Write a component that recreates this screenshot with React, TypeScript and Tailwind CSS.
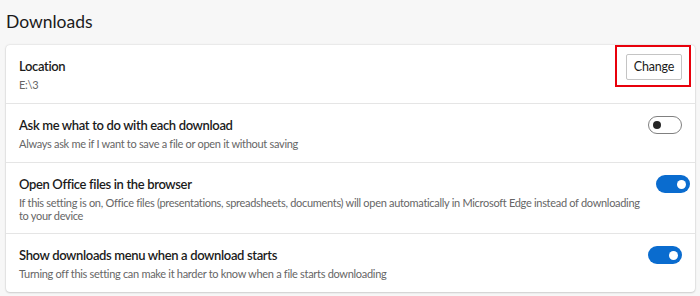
import React from 'react';

const font = { fontFamily: 'Lato, "Noto Sans", Arial, sans-serif' };

const titleCls = 'text-[13px] font-semibold leading-[20px] tracking-[-0.35px] text-[#1b1b1b]';
const descCls = 'text-[11px] tracking-[-0.3px] text-[#666666]';

function Toggle({ on }: { on: boolean }) {
  if (on) {
    return (
      <div className="flex h-[18px] w-[34px] shrink-0 items-center justify-end rounded-full bg-[#0a6ccf] pr-[4px]">
        <div className="h-[9px] w-[9px] rounded-full bg-white" />
      </div>
    );
  }
  return (
    <div className="flex h-[18px] w-[34px] shrink-0 items-center rounded-full border border-[#808080] bg-white pl-[4px]">
      <div className="h-[8px] w-[8px] rounded-full bg-[#262626]" />
    </div>
  );
}

// the control on the right lines up with the title, not the row centre
function Row({
  title,
  desc,
  right,
  last,
  nowrap,
}: {
  title: string;
  desc: React.ReactNode;
  right: React.ReactNode;
  last?: boolean;
  nowrap?: boolean;
}) {
  return (
    <div
      className={`flex items-start justify-between gap-4 pl-[13px] pr-[13px] ${last ? '' : 'border-b border-[#e5e5e5]'}`}
    >
      <div className="py-[11px]">
        <div className={titleCls}>{title}</div>
        {nowrap ? (
          <div className={`mt-[2px] whitespace-nowrap leading-[13px] ${descCls}`}>{desc}</div>
        ) : (
          <div className={`mt-[1px] leading-[15px] ${descCls}`}>{desc}</div>
        )}
      </div>
      {right}
    </div>
  );
}

export default function App() {
  return (
    <div className="min-h-[296px] w-[700px] bg-[#f7f7f7] pl-[6px] pr-[5px] pt-[10px]" style={font}>
      <h1 className="text-[17.5px] font-normal leading-[24px] text-[#1b1b1b]">Downloads</h1>
      <div className="relative mt-[11px] rounded-[4px] bg-white shadow-[0_0_2px_rgba(0,0,0,0.18),0_1px_2px_rgba(0,0,0,0.12)]">
        <Row
          title="Location"
          desc="E:\3"
          right={
            <div className="pt-[8px]">
              <button className="h-[26px] w-[56px] rounded-[2px] border border-[#c4c4c4] bg-white text-[12.5px] tracking-[-0.2px] text-[#1b1b1b]">
                Change
              </button>
            </div>
          }
        />
        <div className="pointer-events-none absolute left-[609px] top-0 h-[42px] w-[76px] border-2 border-[#e8000b]" />
        <Row
          title="Ask me what to do with each download"
          desc="Always ask me if I want to save a file or open it without saving"
          right={
            <div className="pt-[12px]">
              <Toggle on={false} />
            </div>
          }
        />
        <Row
          title="Open Office files in the browser"
          nowrap
          desc={
            <>
              If this setting is on, Office files (presentations, spreadsheets, documents) will open automatically in Microsoft Edge instead of downloading
              <br />
              to your device
            </>
          }
          right={
            <div className="pt-[12px]">
              <Toggle on />
            </div>
          }
        />
        <Row
          title="Show downloads menu when a download starts"
          desc="Turning off this setting can make it harder to know when a file starts downloading"
          right={
            <div className="pt-[12px]">
              <Toggle on />
            </div>
          }
          last
        />
      </div>
    </div>
  );
}
